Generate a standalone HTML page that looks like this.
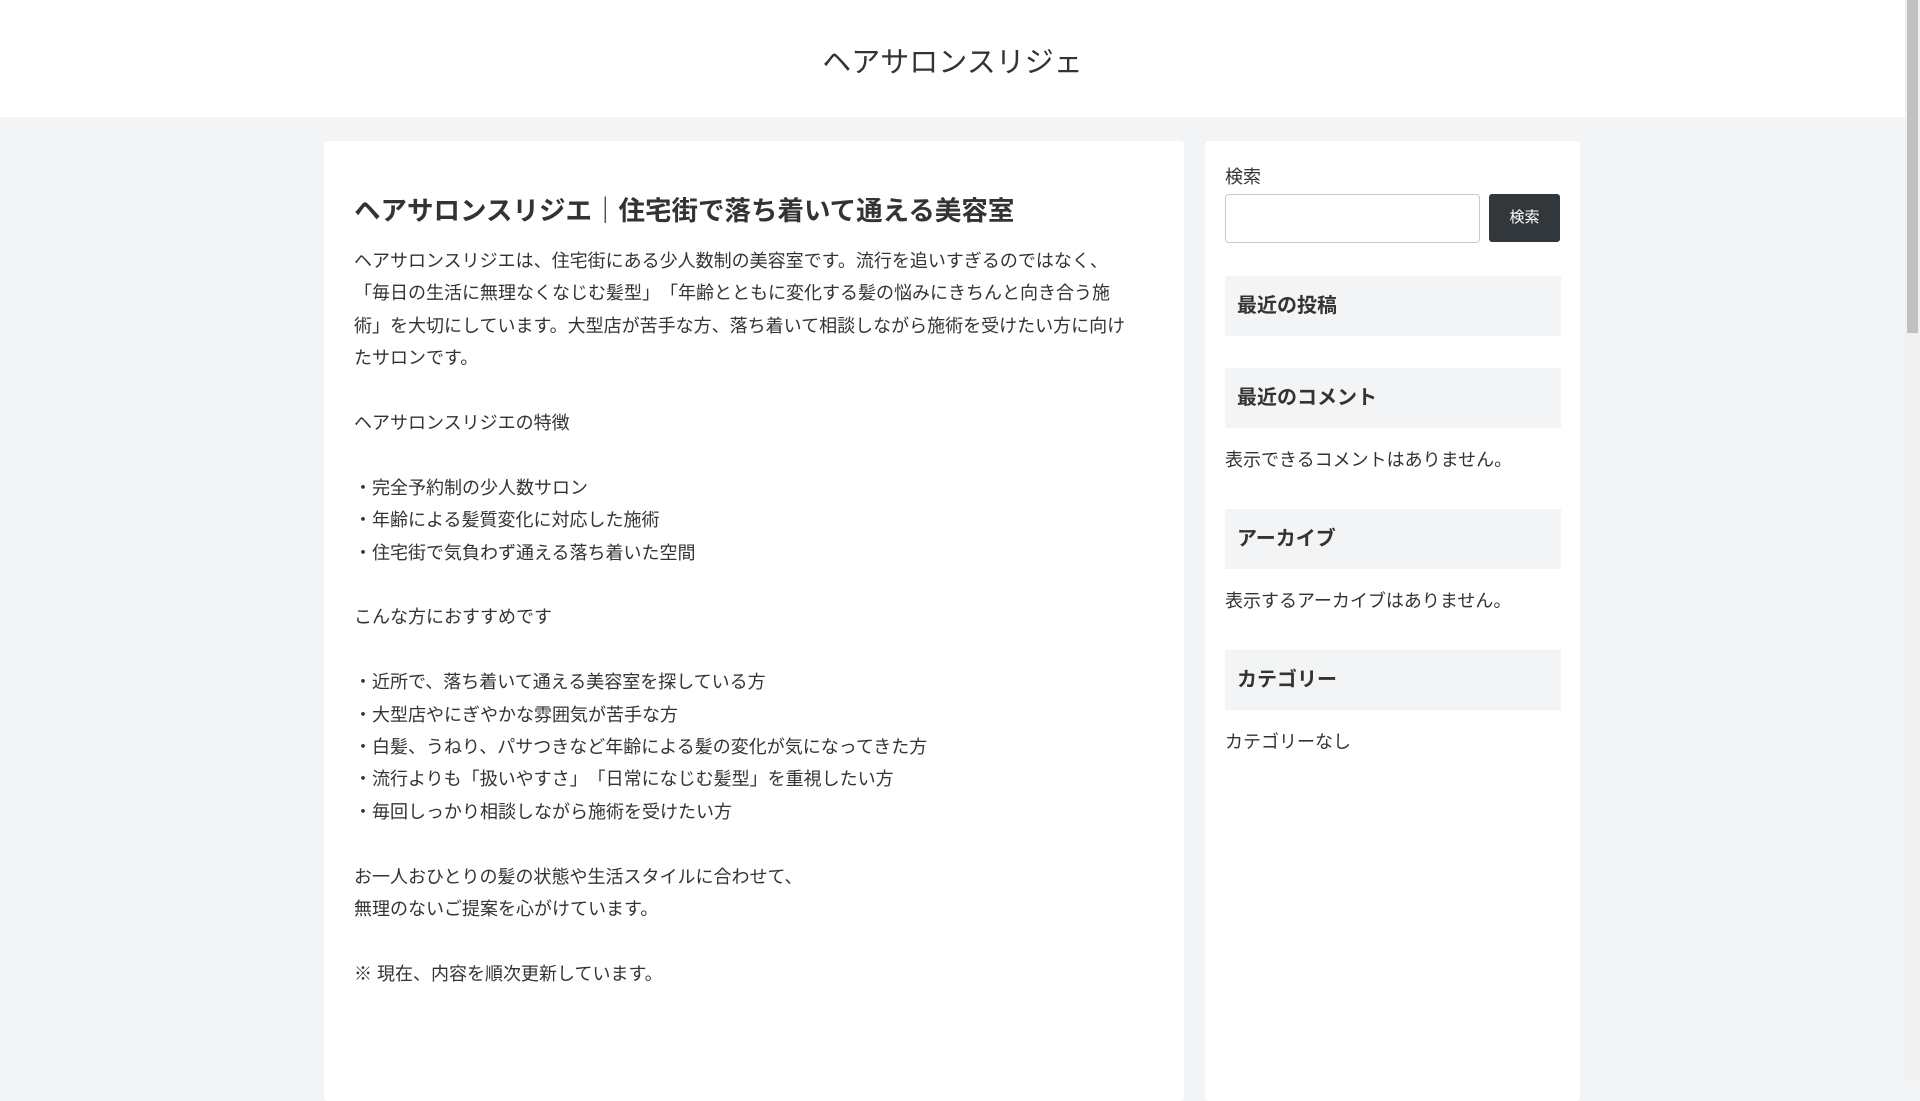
<!DOCTYPE html>
<html><head><meta charset="utf-8"><style>
*{margin:0;padding:0;box-sizing:border-box}
body{width:1920px;height:1080px;overflow:hidden;background:#f3f4f5;font-family:"Liberation Sans","Noto Sans CJK JP",sans-serif;color:#333;position:relative;text-spacing-trim:space-all}
.hdr{position:absolute;left:0;top:0;width:1905px;height:117px;background:#fff}
.hdr h1{position:absolute;left:0;width:1905px;top:43px;text-align:center;font-weight:400;font-size:29px;line-height:40px;color:#333}
.main{position:absolute;left:324px;top:141px;width:860px;height:960px;background:#fff;border-radius:4px}
.main h2{position:absolute;left:30px;top:52px;font-size:26.5px;font-weight:700;line-height:36px;color:#333;white-space:nowrap}
.body{position:absolute;left:30px;top:104px;width:782px;font-size:18px;line-height:32.4px}
.body p{margin-bottom:32.4px}
.side{position:absolute;left:1205px;top:141px;width:375px;height:960px;background:#fff;border-radius:4px}
.a{position:absolute}
.lbl{left:20px;top:23px;font-size:18px;line-height:26px}
.inp{left:20px;top:53px;width:255px;height:49px;border:1px solid #c9c9c9;border-radius:4px;background:#fff}
.btn{left:284px;top:53px;width:71px;height:48px;background:#32373c;color:#fff;border-radius:3px;font-size:15px;text-align:center;line-height:48px}
.wh{left:20px;width:336px;height:60px;background:#f3f4f5;font-weight:700;font-size:20px;line-height:60px;padding-left:12px}
.wt{left:20px;font-size:18px;line-height:26px}
.sb{position:absolute;left:1905px;top:0;width:15px;height:1080px;background:#f1f1f1}
.th{position:absolute;left:1907px;top:0;width:11px;height:333px;background:#c1c1c1}
</style></head><body>
<div class="hdr"><h1>ヘアサロンスリジェ</h1></div>
<div class="main">
<h2>ヘアサロンスリジエ｜住宅街で落ち着いて通える美容室</h2>
<div class="body">
<p>ヘアサロンスリジエは、住宅街にある少人数制の美容室です。流行を追いすぎるのではなく、「毎日の生活に無理なくなじむ髪型」「年齢とともに変化する髪の悩みにきちんと向き合う施術」を大切にしています。大型店が苦手な方、落ち着いて相談しながら施術を受けたい方に向けたサロンです。</p>
<p>ヘアサロンスリジエの特徴</p>
<p>・完全予約制の少人数サロン<br>・年齢による髪質変化に対応した施術<br>・住宅街で気負わず通える落ち着いた空間</p>
<p>こんな方におすすめです</p>
<p>・近所で、落ち着いて通える美容室を探している方<br>・大型店やにぎやかな雰囲気が苦手な方<br>・白髪、うねり、パサつきなど年齢による髪の変化が気になってきた方<br>・流行よりも「扱いやすさ」「日常になじむ髪型」を重視したい方<br>・毎回しっかり相談しながら施術を受けたい方</p>
<p>お一人おひとりの髪の状態や生活スタイルに合わせて、<br>無理のないご提案を心がけています。</p>
<p>※ 現在、内容を順次更新しています。</p>
</div>
</div>
<div class="side">
<div class="a lbl">検索</div>
<div class="a inp"></div>
<div class="a btn">検索</div>
<div class="a wh" style="top:135px">最近の投稿</div>
<div class="a wh" style="top:227px">最近のコメント</div>
<div class="a wt" style="top:306px">表示できるコメントはありません。</div>
<div class="a wh" style="top:368px">アーカイブ</div>
<div class="a wt" style="top:447px">表示するアーカイブはありません。</div>
<div class="a wh" style="top:509px">カテゴリー</div>
<div class="a wt" style="top:588px">カテゴリーなし</div>
</div>
<div class="sb"></div><div class="th"></div>
</body></html>
